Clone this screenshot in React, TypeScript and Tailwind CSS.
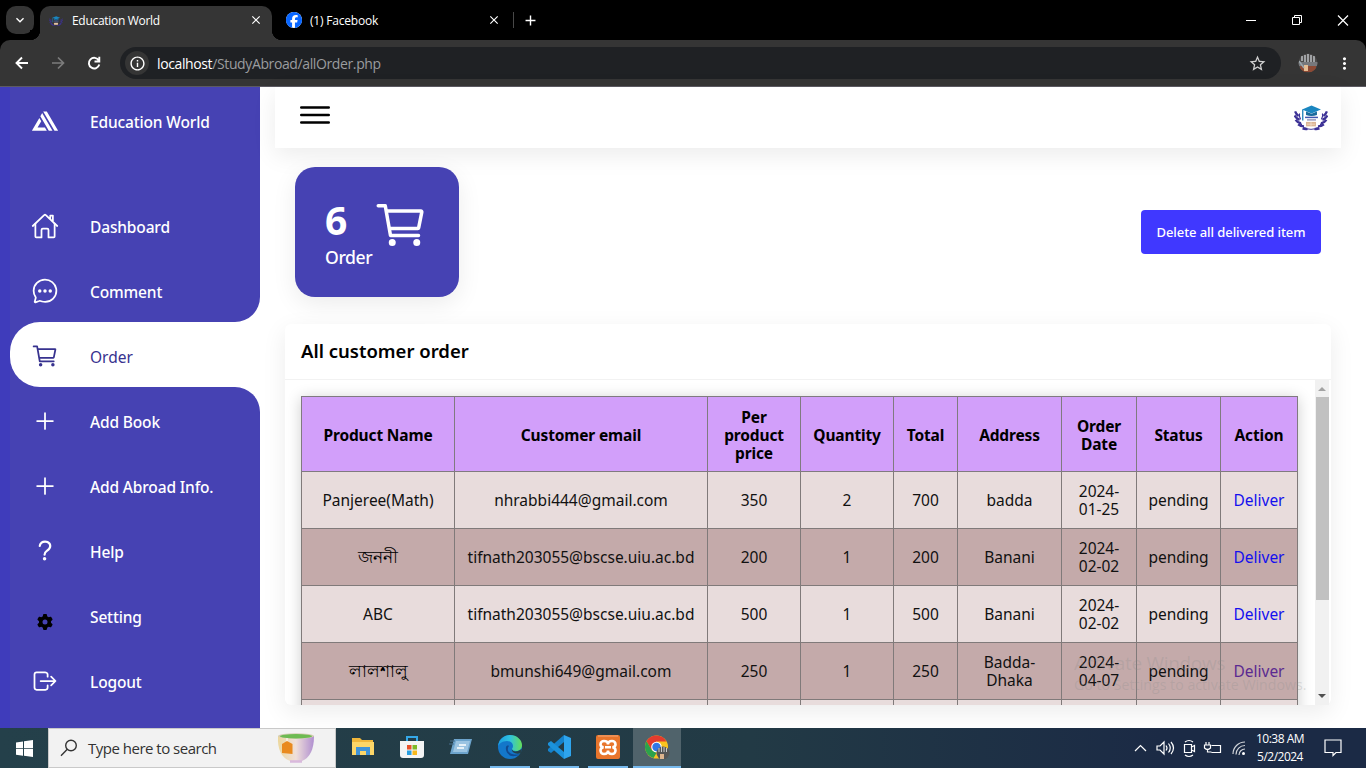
import type { ReactNode } from "react";
import { IoLogoAmplify, IoHomeOutline, IoChatbubbleEllipsesOutline, IoCartOutline, IoAddOutline, IoHelpOutline, IoLogOutOutline, IoMenuOutline } from "react-icons/io5";
import { FaGear, FaFacebook } from "react-icons/fa6";
import { MdInfoOutline, MdStarBorder, MdMoreVert, MdClose, MdAdd, MdKeyboardArrowDown } from "react-icons/md";

function CrestLogo({ size }: { size: number }) {
  return (
    <svg width={size} height={size * 0.76} viewBox="0 0 34 26">
      <g fill="none" stroke="#3d3296">
        <path d="M6 17q3 7.500 11 7.500t11-7.500" strokeWidth="1" />
        <path d="M1 6.500q1 3 3.500 4.500M.5 10.500q1.500 3 5 4.500M1.500 15q2 3 5.500 3.500M4 19.500q2.500 2 6 2M8.500 23.500q2.500 1 5 .5" strokeWidth="2.300" />
        <path d="M33 6.500q-1 3-3.500 4.500M33.500 10.500q-1.500 3-5 4.500M32.500 15q-2 3-5.500 3.500M30 19.500q-2.500 2-6 2M25.500 23.500q-2.500 1-5 .5" strokeWidth="2.300" />
        <path d="M5.500 8.500q-1 3 1 6M28.500 8.500q1 3-1 6" strokeWidth="1.200" />
      </g>
      <path d="M17.500 0.500l9.500 4-9.500 4-9.500-4z" fill="#1a86c0" />
      <path d="M12 6.500v3.500q5.500 2 11 0V6.500l-5.500 2.300z" fill="#186a9c" />
      <path d="M8.700 4.500v11" stroke="#1a7fb8" strokeWidth="1.300" />
      <path d="M11 12.500h13" stroke="#3f57b0" strokeWidth="1.500" />
      <path d="M13 15h9" stroke="#7d7fae" strokeWidth="1.200" />
      <path d="M12 17h10v4.500H12z" fill="#dcb593" />
      <path d="M17 17v4.500M13 19.300h8" stroke="#f3e3d4" strokeWidth=".7" />
    </svg>
  );
}

function Avatar() {
  return (
    <svg width="20" height="20" viewBox="0 0 20 20">
      <clipPath id="av"><circle cx="10" cy="10" r="9.500" /></clipPath>
      <g clipPath="url(#av)">
        <rect width="20" height="20" fill="#4c4a49" />
        <path d="M4 8V3M7 10V2M10 9V1M13 9V2M16 9V3" stroke="#c4c8cc" strokeWidth="1.400" />
        <rect y="9" width="20" height="4" fill="#77787c" />
        <path d="M2 13h16v6H2z" fill="#8d4a35" />
        <rect x="6" y="12" width="4" height="6" fill="#e6bd93" />
        <path d="M1 8l5 7" stroke="#9ba6ac" strokeWidth="1.500" />
      </g>
    </svg>
  );
}

function BrowserChrome() {
  return (
    <div className="flex h-[87px] shrink-0 flex-col bg-black text-white">
      <div className="flex h-10 items-center">
        <div className="ml-[6px] flex h-7 w-7 items-center justify-center rounded-[10px] bg-[#353535]">
          <MdKeyboardArrowDown size={16} />
        </div>
        <div className="relative mt-[6px] ml-[6px] flex h-[34px] w-[232px] items-center rounded-t-[10px] bg-[#353535] pb-[4px] pl-[9px]">
          <CrestLogo size={14} />
          <span className="ml-[9px] font-['Open_Sans',sans-serif] text-[12px] tracking-[-0.3px]">Education World</span>
          <MdClose size={14} className="absolute top-[7px] right-[9px]" />
          <span className="absolute bottom-0 -left-[10px] h-[10px] w-[10px] bg-[radial-gradient(circle_at_0_0,#000_10px,#353535_10.500px)]" />
          <span className="absolute -right-[10px] bottom-0 h-[10px] w-[10px] bg-[radial-gradient(circle_at_100%_0,#000_10px,#353535_10.500px)]" />
        </div>
        <div className="flex w-[241px] items-center pl-[14px]">
          <span className="flex h-4 w-4 items-center justify-center rounded-full bg-white">
            <FaFacebook size={16} className="shrink-0 text-[#0866ff]" />
          </span>
          <span className="ml-2 pt-px font-['Open_Sans',sans-serif] text-[12px] tracking-[-0.2px]">(1) Facebook</span>
          <MdClose size={14} className="mr-[12px] ml-auto" />
        </div>
        <span className="h-4 w-px bg-[#484848]" />
        <MdAdd size={17} className="ml-2" />
        <svg className="ml-auto" width="120" height="20" viewBox="0 0 120 20" fill="none" stroke="#fff" strokeWidth="1">
          <path d="M0 10.500h10M46.500 7.500h7v7h-7zM48.500 7.500v-2h7v7h-2" />
          <path d="M92 5.500l10 10M102 5.500l-10 10" strokeWidth="1.200" />
        </svg>
      </div>
      <div className="flex h-[46px] items-center rounded-t-[10px] bg-[#353535]">
        <svg className="ml-[13px]" width="18" height="18" viewBox="0 0 18 18" fill="none" stroke="#fff" strokeWidth="1.900"><path d="M15 9H4M9 3.500L3.500 9 9 14.500" /></svg>
        <svg className="ml-[18px]" width="18" height="18" viewBox="0 0 18 18" fill="none" stroke="#7c7c7c" strokeWidth="1.700"><path d="M3 9h11M9 3.500L14.500 9 9 14.500" /></svg>
        <svg className="ml-[18px]" width="18" height="18" viewBox="0 0 18 18" fill="none" stroke="#fff" strokeWidth="1.900"><path d="M13.800 6.500A5.300 5.300 0 1 0 14.300 10.500M14.300 2.800v4.700H9.500" /></svg>
        <div className="ml-[17px] flex h-8 w-[1161px] items-center rounded-full bg-[#1f2124] pl-[5px]">
          <span className="flex h-6 w-6 items-center justify-center rounded-full bg-[#353535]">
            <MdInfoOutline size={17} />
          </span>
          <span className="ml-2 font-['Open_Sans',sans-serif] text-[14px] tracking-[-0.38px] text-[#9a9c9f]">
            <span className="text-white">localhost</span>/StudyAbroad/allOrder.php
          </span>
          <MdStarBorder size={19} className="mr-[14px] ml-auto text-[#d0d0d0]" />
        </div>
        <span className="ml-[17px]"><Avatar /></span>
        <MdMoreVert size={19} className="ml-[17px]" />
      </div>
      <div className="h-px bg-[#5c5a62]" />
    </div>
  );
}

function MenuItem({ icon, label, dark }: { icon: ReactNode; label: string; dark?: boolean }) {
  return (
    <div className={dark ? "flex h-[65px] text-[#37328f]" : "flex h-[65px] text-white"}>
      <span className="flex h-[70px] w-[70px] items-center justify-center pb-[3px]">{icon}</span>
      <span className={dark ? "pl-[10px] text-[15.500px] leading-[70px]" : "pl-[10px] text-[15.500px] leading-[70px] font-medium tracking-[-0.15px]"}>{label}</span>
    </div>
  );
}

function Sidebar() {
  return (
    <aside className="flex w-[260px] shrink-0 flex-col border-l-[10px] border-[#3f3cbb]">
      <div className="flex h-[235px] flex-col rounded-br-[25px] bg-[#4642b3]">
        <div className="mb-10"><MenuItem icon={<IoLogoAmplify size={28} />} label="Education World" /></div>
        <MenuItem icon={<IoHomeOutline size={28} />} label="Dashboard" />
        <MenuItem icon={<IoChatbubbleEllipsesOutline size={28} />} label="Comment" />
      </div>
      <div className="h-[65px] shrink-0 bg-[linear-gradient(to_right,#4642b3_50%,#fff_50%)]">
        <div className="h-full rounded-l-[30px] bg-white"><MenuItem dark icon={<IoCartOutline size={28} />} label="Order" /></div>
      </div>
      <div className="flex-1 rounded-tr-[25px] bg-[#4642b3]">
        <MenuItem icon={<IoAddOutline size={28} />} label="Add Book" />
        <MenuItem icon={<IoAddOutline size={28} />} label="Add Abroad Info." />
        <MenuItem icon={<IoHelpOutline size={28} />} label="Help" />
        <MenuItem icon={<FaGear size={16} className="mt-[13px] text-black" />} label="Setting" />
        <MenuItem icon={<IoLogOutOutline size={28} />} label="Logout" />
      </div>
    </aside>
  );
}

const rows = [
  ["Panjeree(Math)", "nhrabbi444@gmail.com", "350", "2", "700", "badda", "2024-01-25"],
  ["জননী", "tifnath203055@bscse.uiu.ac.bd", "200", "1", "200", "Banani", "2024-02-02"],
  ["ABC", "tifnath203055@bscse.uiu.ac.bd", "500", "1", "500", "Banani", "2024-02-02"],
  ["লালশালু", "bmunshi649@gmail.com", "250", "1", "250", "Badda-Dhaka", "2024-04-07"],
  ["", "", "", "", "", "", ""],
];
const heads = ["Product Name", "Customer email", "Per product price", "Quantity", "Total", "Address", "Order Date", "Status", "Action"];

function cellClass(row: number, col: number) {
  if (col === 0 && row % 2) return "border border-[#807a7a] text-[17px] font-medium text-black";
  if (col === 5 || col === 6) return "border border-[#807a7a] px-3";
  return "border border-[#807a7a]";
}

function OrdersTable() {
  return (
    <table className="w-[997px] table-fixed border-collapse text-center text-[15.500px] leading-[18px] text-[#111] shadow-[0_2px_14px_rgba(0,0,0,0.2)]">
      <colgroup>
        <col className="w-[153px]" /><col className="w-[253px]" /><col className="w-[93px]" /><col className="w-[93px]" /><col className="w-[64px]" />
        <col className="w-[104px]" /><col className="w-[75px]" /><col className="w-[84px]" /><col className="w-[77px]" />
      </colgroup>
      <thead>
        <tr className="h-[75px] bg-[#d29ffa]">
          {heads.map((h) => <th key={h} className="border border-[#807a80] px-[9px] pt-px font-bold tracking-[-0.15px] text-black">{h}</th>)}
        </tr>
      </thead>
      <tbody>
        {rows.map((r, i) => (
          <tr key={i} className={i % 2 ? "h-[57px] bg-[#c4aaaa]" : "h-[57px] bg-[#e8dcdc]"}>
            {r.map((c, j) => <td key={j} className={cellClass(i, j)}>{c}</td>)}
            <td className="border border-[#807a7a] tracking-[-0.1px]">{r[0] && "pending"}</td>
            <td className={i === 3 ? "border border-[#807a7a] text-[#5b2a91]" : "border border-[#807a7a] text-[#1410ee]"}>{r[0] && "Deliver"}</td>
          </tr>
        ))}
      </tbody>
    </table>
  );
}

function Main() {
  return (
    <main className="flex min-w-0 flex-1 flex-col pl-[15px]">
      <header className="flex h-[61px] w-[1066px] shrink-0 items-start justify-between bg-white pr-[13px] pl-5 shadow-[0_7px_25px_rgba(0,0,0,0.08)]">
        <IoMenuOutline size={40} className="mt-2 text-black" />
        <span className="mt-[18px]"><CrestLogo size={34} /></span>
      </header>
      <div className="flex h-[176px] w-[1066px] shrink-0 items-start justify-between pt-[19px] pr-5 pl-5">
        <div className="flex h-[130px] w-[164px] rounded-[20px] bg-[#4642b3] pl-[30px] text-white shadow-[0_7px_25px_rgba(0,0,0,0.08)]">
          <div className="w-12">
            <div className="mt-[31px] text-[39px] leading-[43px] font-bold">6</div>
            <div className="text-[17.600px] leading-[33px] font-medium tracking-[-0.4px]">Order</div>
          </div>
          <IoCartOutline size={56} className="mt-[30px] shrink-0" />
        </div>
        <button className="mt-[43px] h-11 w-[180px] rounded-[4px] bg-[#4038ff] pt-px text-[13px] font-medium tracking-[-0.08px] text-white">Delete all delivered item</button>
      </div>
      <section className="ml-[10px] h-[381px] w-[1046px] rounded-[6px] bg-white shadow-[0_7px_25px_rgba(0,0,0,0.08)]">
        <h2 className="h-[55px] pl-4 text-[18.500px] leading-[54px] font-semibold text-black">All customer order</h2>
        <div className="flex h-[326px] border-t border-[#f2f2f2]">
          <div className="h-full flex-1 overflow-hidden pt-4 pl-4"><OrdersTable /></div>
          <div className="mr-[2px] flex w-[14px] flex-col items-center bg-[#f1f1f1]">
            <svg width="14" height="17" viewBox="0 0 14 17"><path d="M3 11l4-4 4 4z" fill="#a3a3a3" /></svg>
            <div className="h-[203px] w-[13px] bg-[#c1c1c1]" />
            <svg className="mt-auto" width="14" height="17" viewBox="0 0 14 17"><path d="M3 6l4 4 4-4z" fill="#505050" /></svg>
          </div>
        </div>
      </section>
      <div className="pointer-events-none absolute top-[652px] left-[1074px] font-['Open_Sans',sans-serif] whitespace-nowrap text-[#8a8a8a40]">
        <div className="text-[19px] leading-[23px] tracking-[-0.3px]">Activate Windows</div>
        <div className="text-[14.200px] leading-[20px]">Go to Settings to activate Windows.</div>
      </div>
    </main>
  );
}

function AppSlot({ children, open, active }: { children: ReactNode; open?: boolean; active?: boolean }) {
  return (
    <div className={active ? "flex h-10 w-12 flex-col items-center bg-[#50636b]" : "flex h-10 w-10 flex-col items-center"}>
      <div className="flex h-[38px] items-center">{children}</div>
      {open && <div className="h-[2px] w-full bg-[#76b9ed]" />}
    </div>
  );
}

function Taskbar() {
  return (
    <footer className="flex h-10 shrink-0 items-center bg-[linear-gradient(to_right,#24404a,#223a45_55%,#1b2a45_85%)] text-white">
      <svg className="ml-4" width="17" height="17" viewBox="0 0 17 17" fill="#fff"><path d="M0 2.400l7-1v6.800H0zM8 1.200L17 0v8.200H8zM0 9h7v6.800l-7-1zM8 9h9v8l-9-1.200z" /></svg>
      <div className="ml-[15px] flex h-10 w-72 items-center border border-[#c9c9c9] bg-[#f2f2f2] pl-[11px] text-[#333]">
        <svg width="18" height="18" viewBox="0 0 18 18" fill="none" stroke="#333" strokeWidth="1.400"><circle cx="11" cy="6.500" r="5.300" /><path d="M7.300 10.300L1 16.800" /></svg>
        <span className="ml-[10px] font-['Open_Sans',sans-serif] text-[15px] tracking-[-0.5px]">Type here to search</span>
        <svg className="mr-[20px] ml-auto" width="38" height="32" viewBox="0 0 38 32">
          <defs><linearGradient id="cup"><stop offset="0" stopColor="#ecd79c" /><stop offset=".5" stopColor="#efdfda" /><stop offset="1" stopColor="#b08fd0" /></linearGradient></defs>
          <path d="M1 4h36q0 20-12 25H13Q0 24 1 4z" fill="url(#cup)" />
          <ellipse cx="19" cy="4" rx="18" ry="2.800" fill="#d5ceb4" />
          <ellipse cx="19" cy="4.200" rx="16" ry="2.200" fill="#6dbb52" />
          <path d="M10 6v5" stroke="#fff" /><path d="M5 12l5-3 5.500 3v10L5 21z" fill="#e98a1e" />
          <path d="M13 29.500h12" stroke="#d9b9dc" strokeWidth="2.500" />
        </svg>
      </div>
      <div className="ml-[7px] flex gap-[9px]">
        <AppSlot><svg width="22" height="20" viewBox="0 0 22 20"><path d="M0 1h8l2 2h11v15H0z" fill="#f0b73b" /><path d="M0 5h22v13H0z" fill="#fcd668" /><path d="M4 18v-8h14v8h-4v-4H8v4z" fill="#3f93d8" /></svg></AppSlot>
        <AppSlot><svg width="24" height="24" viewBox="0 0 24 24"><path d="M7 6V2h10v4" fill="none" stroke="#35a8e8" strokeWidth="2" /><path d="M0 6h24v14q0 3-3 3H3q-3 0-3-3z" fill="#f4f4f4" /><path d="M7 10h4.500v4.500H7z" fill="#e8512a" /><path d="M12.500 10H17v4.500h-4.500z" fill="#7db928" /><path d="M7 15.500h4.500V20H7z" fill="#2a9fe0" /><path d="M12.500 15.500H17V20h-4.500z" fill="#f7b81c" /></svg></AppSlot>
        <AppSlot><svg width="24" height="20" viewBox="0 0 24 20"><path d="M5 2h18l-4 15H1z" fill="#6da4cd" /><path d="M7 4h14l-3 11H4z" fill="#9cc4e2" /><path d="M10 8h7M8 11h7" stroke="#fff" strokeWidth="1.500" /><path d="M1 4h5M0 7h5" stroke="#476c8c" /></svg></AppSlot>
        <AppSlot open><svg width="24" height="24" viewBox="0 0 24 24"><defs><linearGradient id="e1" x1="0" y1="0" x2="1" y2="0"><stop offset="0" stopColor="#1b9de2" /><stop offset=".5" stopColor="#2fc2df" /><stop offset="1" stopColor="#66df58" /></linearGradient></defs><circle cx="12" cy="12" r="12" fill="#1377ca" /><path d="M0 11C1 4 6 0 12 0c7 0 12 5 12 10 0 4-3 6-6 6-3 0-4-1-4-2s1-1 1-3c0-3-3-5-6-5-5 0-8 3-9 5z" fill="url(#e1)" /><path d="M8 12c-1 5 3 10 9 9 2 0 4-1 5-2-2 1-9 1-11-2-2-2-1-5 0-6-1-1-3 0-3 1z" fill="#114a91" /><path d="M14 14c0 2 3 3 6 2l4-2-1 4c-5 2-10-1-9-4z" fill="#24404a" /></svg></AppSlot>
        <AppSlot open><svg width="24" height="24" viewBox="0 0 24 24"><path d="M17 0l7 3v18l-7 3z" fill="#2ea5ee" /><path d="M17 0v7L4 18l-3-2v-2z" fill="#1482cc" /><path d="M17 24v-7L4 6 1 8v2z" fill="#1b92dc" /></svg></AppSlot>
        <AppSlot open>
          <svg width="24" height="24" viewBox="0 0 24 24" fill="none">
            <rect width="24" height="24" rx="2" fill="#e8752c" />
            <path d="M2 1h20" stroke="#f2a878" />
            <path d="M12 9.500C12 6.500 10 6 8 6S4.500 7.500 4.500 9.500 6 12 7.500 12.300C6 12.600 4.500 13.500 4.500 15.500S6 19 8 19s4-.5 4-3.500c0 3 2 3.500 4 3.500s3.500-1.500 3.500-3.500S18 12.600 16.500 12.300C18 12 19.500 11.500 19.500 9.500S18 6 16 6s-4 .5-4 3.500zM9 12.300h6" stroke="#fff" strokeWidth="2.600" />
          </svg>
        </AppSlot>
        <div className="-ml-1"><AppSlot open active>
          <svg width="25" height="25" viewBox="0 0 25 25"><circle cx="11.500" cy="12" r="11.500" fill="#f9c31f" /><path d="M1.500 6.200A11.500 11.500 0 0 1 21.500 6.500H11.500L6.500 15z" fill="#e33b2e" /><path d="M1.500 6.200L6.700 15l4.800 3-3 5A11.500 11.500 0 0 1 1.500 6.200z" fill="#2ba24c" /><circle cx="11.500" cy="12" r="5.300" fill="#fff" /><circle cx="11.500" cy="12" r="4.200" fill="#3277e5" /><circle cx="18" cy="18" r="6.500" fill="#555" /><path d="M14 17v-4M16.500 17v-5M19 17v-5M21.500 17v-4" stroke="#ccc" /><rect x="15" y="19" width="4" height="5" fill="#deb48e" /></svg>
        </AppSlot></div>
      </div>
      <svg className="ml-auto" width="116" height="24" viewBox="0 0 116 24" fill="none" stroke="#fff" strokeWidth="1.200">
        <path d="M1 15l5.500-5.500L12 15" />
        <path d="M23 10h3l4-4v12l-4-4h-3zM32 9.500q2 2.500 0 5M34.500 7.500q3.500 4.500 0 9M37 6q5 6 0 12" />
        <path d="M50.500 8.500h7v8h-7zM57.500 11l3-1.500v6l-3-1.500M51 6q4-3 8 0M51 19q4 3 8 0" />
        <path d="M77.500 9.500h9v7h-9M72 6v3M75 6v3M70.500 9h6v3q-3 3-6 0zM73.500 13v3h4" />
        <path d="M99 18a12 12 0 0 1 12-12M102 18.500a9 9 0 0 1 9-9M105 19a6 6 0 0 1 6-6" opacity=".8" /><circle cx="109.500" cy="17.500" r="1.500" fill="#fff" stroke="none" />
      </svg>
      <div className="-ml-1 w-[68px] text-center font-['Open_Sans',sans-serif] text-[12px] leading-[18px] tracking-[-0.5px]"><div>10:38 AM</div><div>5/2/2024</div></div>
      <svg className="mr-[24px] ml-[10px]" width="18" height="18" viewBox="0 0 18 18" fill="none" stroke="#fff" strokeWidth="1.200"><path d="M1 1h16v12.500h-5l-3 3v-3H1z" /></svg>
    </footer>
  );
}

export default function App() {
  return (
    <div className="relative flex h-[768px] w-[1366px] flex-col overflow-hidden bg-white font-['Noto_Sans',sans-serif]">
      <BrowserChrome />
      <div className="flex min-h-0 flex-1">
        <Sidebar />
        <Main />
      </div>
      <Taskbar />
    </div>
  );
}
